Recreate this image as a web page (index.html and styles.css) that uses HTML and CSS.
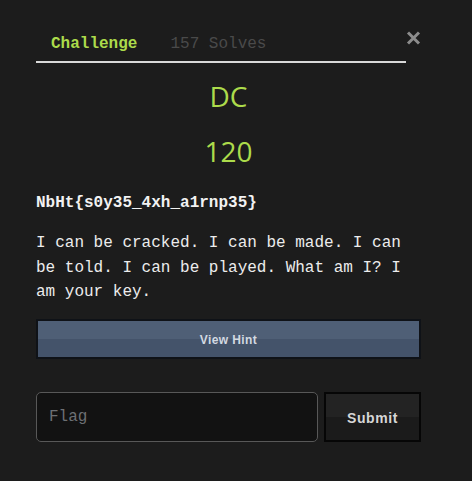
FILE: index.html
```html
<!DOCTYPE html>
<html>
<head>
<meta charset="utf-8">
<link rel="stylesheet" href="styles.css">
</head>
<body>
<div class="modal">
  <div class="header">
    <div class="tabs">
      <span class="tab active">Challenge</span>
      <span class="tab">157 Solves</span>
    </div>
    <svg class="close" width="15" height="14" viewBox="0 0 15 14">
      <path d="M2 1.5 L13 12.5 M13 1.5 L2 12.5" stroke="#8c8c8c" stroke-width="3" stroke-linecap="butt"/>
    </svg>
  </div>
  <div class="content">
    <h2 class="name">DC</h2>
    <h3 class="value">120</h3>
    <p class="flagtext">NbHt{s0y35_4xh_a1rnp35}</p>
    <p class="desc">I can be cracked. I can be made. I can be told. I can be played. What am I? I am your key.</p>
    <button class="hint">View Hint</button>
    <div class="submit-row">
      <input class="flag-input" type="text" placeholder="Flag">
      <button class="submit">Submit</button>
    </div>
  </div>
</div>
</body>
</html>
```
FILE: styles.css
```css
html, body {
  margin: 0;
  padding: 0;
  background: #1c1c1c;
}
.modal {
  padding: 34px 51px 0 36px;
  font-family: "Liberation Mono", "DejaVu Sans Mono", monospace;
}
.header {
  display: flex;
  align-items: flex-start;
}
.tabs {
  flex: 1;
  display: flex;
  gap: 33px;
  padding: 0 15px 7px;
  border-bottom: 2px solid #d9d9d9;
}
.tab {
  font-size: 16px;
  line-height: 20px;
  color: #4a4a4a;
}
.tab.active {
  color: #acdb4b;
  font-weight: bold;
}
.close {
  margin-top: -3px;
  flex: none;
}
.content {
  display: flex;
  flex-direction: column;
}
.name, .value {
  margin: 0;
  font-family: "Open Sans", "Noto Sans", sans-serif;
  font-weight: 500;
  font-size: 28px;
  line-height: 38px;
  text-align: center;
  color: #acdb4b;
}
.name {
  margin-top: 14px;
}
.value {
  margin-top: 17px;
}
.flagtext {
  margin: 23px 0 0;
  font-size: 16px;
  line-height: 20px;
  font-weight: bold;
  color: #f2f2f2;
}
.desc {
  margin: 18px 0 0;
  font-size: 16px;
  line-height: 24.5px;
  color: #ececec;
}
.hint {
  margin-top: 14px;
  height: 40px;
  border: 2px solid #0f1217;
  background: linear-gradient(#4f5f76 50%, #44536a 50%);
  color: #d3d9e1;
  font-family: "Liberation Sans", Arial, sans-serif;
  font-weight: bold;
  font-size: 12px;
  letter-spacing: 0.4px;
  padding: 2px 0 0;
}
.submit-row {
  display: flex;
  gap: 6px;
  margin-top: 33px;
}
.flag-input {
  flex: 1;
  height: 50px;
  box-sizing: border-box;
  border: 1px solid #585858;
  border-radius: 5px;
  background: #121212;
  padding: 0 12px;
  font-family: "Liberation Mono", "DejaVu Sans Mono", monospace;
  font-size: 16px;
  color: #ddd;
  outline: none;
}
.flag-input::placeholder {
  color: #6d7074;
}
.submit {
  width: 97px;
  height: 50px;
  box-sizing: border-box;
  border: 2px solid #060606;
  background: linear-gradient(#232323 50%, #1b1b1b 50%);
  color: #d6d6d6;
  font-family: "Liberation Sans", Arial, sans-serif;
  font-weight: bold;
  font-size: 14px;
  letter-spacing: 0.6px;
  padding: 2px 0 0;
}
```
